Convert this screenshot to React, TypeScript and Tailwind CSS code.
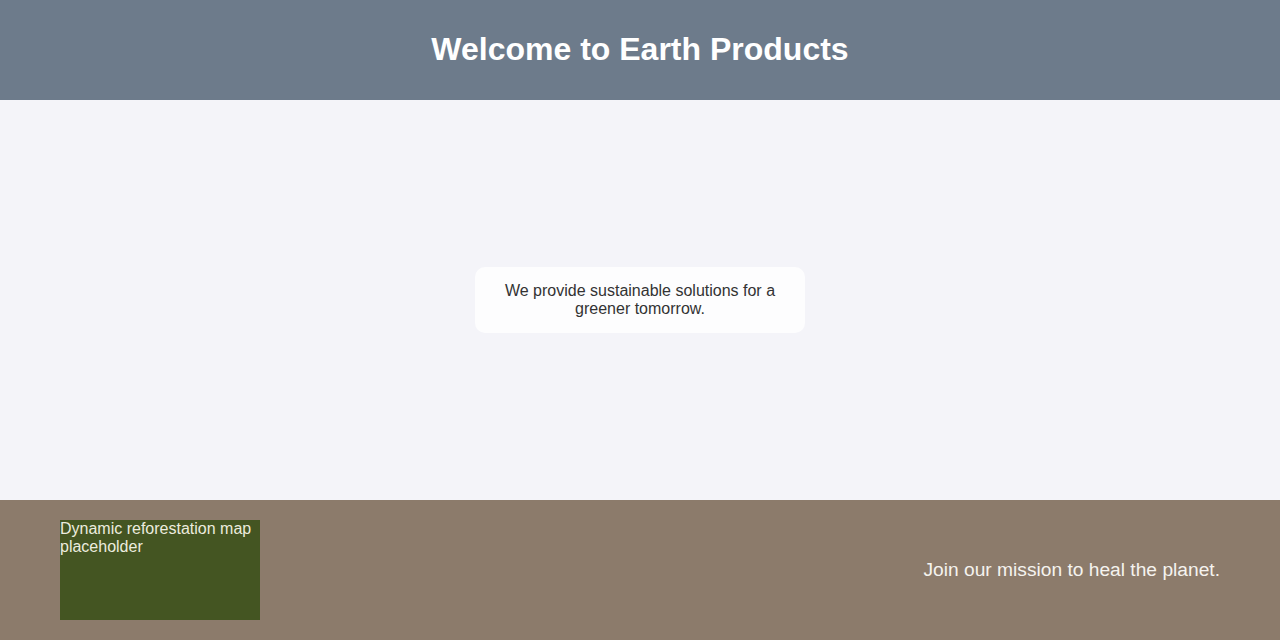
export default function App() {
  return (
    <div className="flex h-[640px] w-full flex-col font-['Liberation_Sans',Arial,sans-serif]">
      <header className="flex h-[100px] items-center justify-center bg-[#6d7b8b] pb-[2px]">
        <h1 className="text-[32px] font-bold leading-[37px] text-white">Welcome to Earth Products</h1>
      </header>
      <main className="flex h-[400px] items-center justify-center bg-[#f4f4f9]">
        <div className="w-[330px] rounded-[10px] bg-[#fdfdfe] px-[15px] py-[15px] text-center text-[16px] leading-[18px] text-[#333333]">
          We provide sustainable solutions for a greener tomorrow.
        </div>
      </main>
      <footer className="flex h-[140px] items-center justify-between bg-[#8c7b6b] px-[60px]">
        <div className="h-[100px] w-[200px] bg-[#445522] text-[16px] leading-[18px] text-[#ececdf]">
          Dynamic reforestation map placeholder
        </div>
        <p className="text-[19.2px] leading-[22px] text-[#f5f3ef]">Join our mission to heal the planet.</p>
      </footer>
    </div>
  );
}
